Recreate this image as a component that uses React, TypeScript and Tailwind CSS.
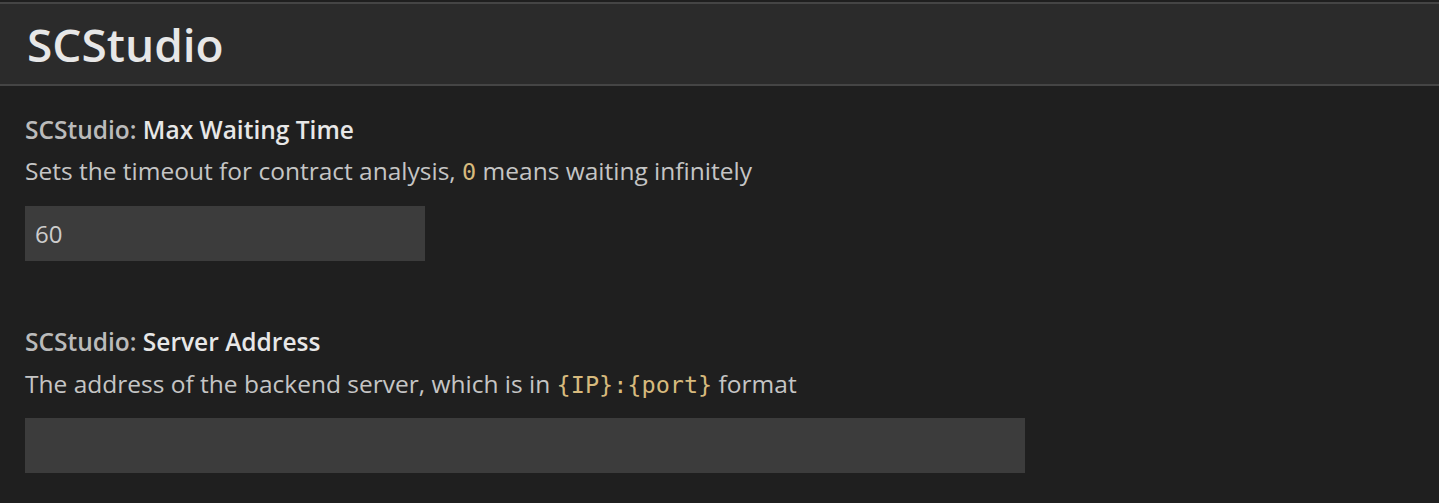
export default function App() {
  return (
    <div className="min-h-[503px] w-full bg-[#1f1f1f] pt-[2px] font-['Open_Sans',sans-serif]">
      <div className="h-[84px] border-y-2 border-[#454545] bg-[#2b2b2b] pl-[27px] flex items-center">
        <h1 className="text-[46px] font-semibold text-[#e7e7e7] leading-none">SCStudio</h1>
      </div>
      <div className="pl-[25px] pt-[28px]">
        <div className="text-[24.5px] font-semibold leading-[32px]">
          <span className="text-[#bbbbbb]">SCStudio: </span>
          <span className="text-[#e7e7e7]">Max Waiting Time</span>
        </div>
        <p className="mt-[9px] text-[24.5px] text-[#c5c5c5] leading-[32px]">
          Sets the timeout for contract analysis,{' '}
          <code className="font-['DejaVu_Sans_Mono',monospace] text-[#d7ba7d] text-[23.5px]">0</code> means waiting infinitely
        </p>
        <input
          className="mt-[18px] block w-[400px] h-[55px] bg-[#3c3c3c] px-[10px] text-[24px] text-[#cccccc] outline-none"
          defaultValue="60"
        />

        <div className="mt-[65px] text-[24.5px] font-semibold leading-[32px]">
          <span className="text-[#bbbbbb]">SCStudio: </span>
          <span className="text-[#e7e7e7]">Server Address</span>
        </div>
        <p className="mt-[10px] text-[24.5px] text-[#c5c5c5] leading-[32px]">
          The address of the backend server, which is in{' '}
          <code className="font-['DejaVu_Sans_Mono',monospace] text-[#d7ba7d] text-[23.5px]">{'{IP}:{port}'}</code> format
        </p>
        <input className="mt-[17px] block w-[1000px] h-[55px] bg-[#3c3c3c] px-[10px] text-[24px] text-[#cccccc] outline-none" />
      </div>
    </div>
  );
}
